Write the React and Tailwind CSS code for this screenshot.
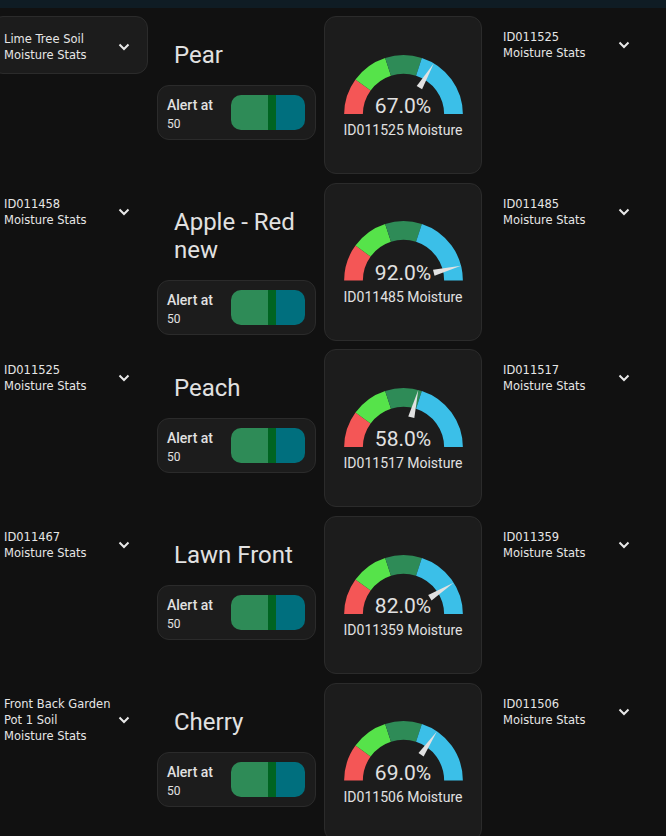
import React from "react";

const rows = [
  { left: ["Lime Tree Soil", "Moisture Stats"], leftCard: true, title: ["Pear"], value: 67, id: "ID011525", right: "ID011525" },
  { left: ["ID011458", "Moisture Stats"], title: ["Apple - Red", "new"], value: 92, id: "ID011485", right: "ID011485" },
  { left: ["ID011525", "Moisture Stats"], title: ["Peach"], value: 58, id: "ID011517", right: "ID011517" },
  { left: ["ID011467", "Moisture Stats"], title: ["Lawn Front"], value: 82, id: "ID011359", right: "ID011359" },
  { left: ["Front Back Garden", "Pot 1 Soil", "Moisture Stats"], title: ["Cherry"], value: 69, id: "ID011506", right: "ID011506" },
];

const segments = [
  { from: 0, to: 0.2, color: "#f45656" },
  { from: 0.2, to: 0.4, color: "#56e34a" },
  { from: 0.4, to: 0.6, color: "#2e8b57" },
  { from: 0.6, to: 1, color: "#3bbfe8" },
];

function pt(f) {
  const a = Math.PI * f;
  return [(-40 * Math.cos(a)).toFixed(3), (-40 * Math.sin(a)).toFixed(3)];
}

function Gauge({ value }) {
  return (
    <svg width="125" height="62.5" viewBox="-50 -50 100 50" className="block">
      {segments.map((s, i) => {
        const [x1, y1] = pt(s.from);
        const [x2, y2] = pt(s.to);
        return (
          <path
            key={i}
            d={`M ${x1} ${y1} A 40 40 0 0 1 ${x2} ${y2}`}
            fill="none"
            stroke={s.color}
            strokeWidth="15"
          />
        );
      })}
      <path
        d="M -25 -2.5 L -47.5 0 L -25 2.5 z"
        fill="#e1e1e1"
        transform={`rotate(${(value / 100) * 180})`}
      />
    </svg>
  );
}

function Chevron() {
  return (
    <svg width="12" height="8" viewBox="0 0 12 8" className="block">
      <polyline points="1.5,1.5 6,6 10.5,1.5" fill="none" stroke="#e8e8e8" strokeWidth="2" />
    </svg>
  );
}

function Expander({ lines, card }) {
  const text = (
    <div className="flex-1 text-[11.5px] leading-[16px] text-[#e6e6e6] [font-family:'DejaVu_Sans',sans-serif]">
      {lines.map((l, i) => (
        <div key={i} className="whitespace-nowrap">{l}</div>
      ))}
    </div>
  );
  if (card) {
    return (
      <div className="flex h-[58px] items-center rounded-xl border border-[#2b2b2b] bg-[#1c1c1c] pl-[12px] pt-[3px]">
        {text}
        <div className="mr-[15px] flex w-[16px] justify-center">
          <Chevron />
        </div>
      </div>
    );
  }
  return (
    <div className="flex items-center pl-[13px] pt-[13px]">
      {text}
      <div className="mr-[16px] flex w-[16px] justify-center">
        <Chevron />
      </div>
    </div>
  );
}

function AlertCard() {
  return (
    <div className="flex h-[55px] items-center justify-between rounded-xl border border-[#2b2b2b] bg-[#1c1c1c] pl-[9px] pr-[10px] [font-family:Roboto,sans-serif]">
      <div className="self-start pt-[9px] text-[#e1e1e1]">
        <div className="text-[14px] font-medium leading-[20px]">Alert at</div>
        <div className="mt-[1px] text-[12px] leading-[16px]">50</div>
      </div>
      <div className="flex h-[35px] w-[74px] overflow-hidden rounded-[10px]">
        <div className="w-[37px] bg-[#2e8b57]" />
        <div className="w-[8px] bg-[#006421]" />
        <div className="flex-1 bg-[#006f7e]" />
      </div>
    </div>
  );
}

function GaugeCard({ value, id }) {
  return (
    <div className="flex h-[158px] flex-col items-center rounded-xl border border-[#2b2b2b] bg-[#1c1c1c] pt-[34.5px] [font-family:Roboto,sans-serif]">
      <div className="relative">
        <Gauge value={value} />
        <div className="absolute bottom-[-3px] left-0 right-0 text-center text-[21px] leading-none text-[#e1e1e1]">
          {value.toFixed(1)}%
        </div>
      </div>
      <div className="mt-[6px] text-[14px] leading-[20px] text-[#e1e1e1]">{id} Moisture</div>
    </div>
  );
}

export default function App() {
  return (
    <div className="h-[836px] overflow-hidden bg-[#111111]">
      <div className="h-2 bg-[#0f1c24]" />
      <div className="ml-[-9px] flex flex-col gap-y-[8.7px] pt-2">
        {rows.map((r, i) => (
          <div key={i} className="grid h-[158px] grid-cols-[158px_159px_158px_158px] gap-x-[8px]">
            <div className="pr-[1px]">
              <Expander lines={r.left} card={r.leftCard} />
            </div>
            <div className="flex flex-col">
              <div className="pb-[16px] pl-[17px] pt-[25px] text-[24px] leading-[28px] text-[#e1e1e1] [font-family:Roboto,sans-serif]">
                {r.title.map((t, j) => (
                  <div key={j}>{t}</div>
                ))}
              </div>
              <AlertCard />
            </div>
            <div>
              <GaugeCard value={r.value} id={r.id} />
            </div>
            <div>
              <Expander lines={[r.right, "Moisture Stats"]} />
            </div>
          </div>
        ))}
      </div>
    </div>
  );
}
